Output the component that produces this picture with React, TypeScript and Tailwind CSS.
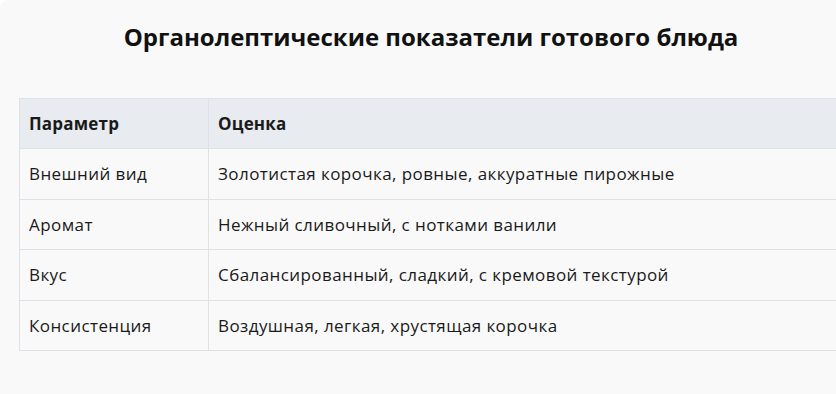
import React from "react";

const rows = [
  ["Внешний вид", "Золотистая корочка, ровные, аккуратные пирожные"],
  ["Аромат", "Нежный сливочный, с нотками ванили"],
  ["Вкус", "Сбалансированный, сладкий, с кремовой текстурой"],
  ["Консистенция", "Воздушная, легкая, хрустящая корочка"],
];

export default function App() {
  return (
    <div className="w-[836px] h-[394px] overflow-hidden bg-white" style={{ fontFamily: '"Open Sans", "Noto Sans", sans-serif' }}>
      <div className="w-[862px] h-[420px] rounded-lg bg-[#f9f9f9] px-[19px] pt-[21px] text-[#1a1a1a]">
        <h1 className="text-[24px] leading-[32px] font-bold text-center text-[#111]">
          Органолептические показатели готового блюда
        </h1>
        <table className="mt-[45px] w-full border-collapse text-[17px] tracking-[0.42px]">
          <thead>
            <tr className="bg-[#e8ebef]">
              <th className="w-[189px] h-[50.4px] border border-[#dee2e6] px-[9px] text-left font-bold tracking-[0.2px]">Параметр</th>
              <th className="h-[50.4px] border border-[#dee2e6] px-[9px] text-left font-bold tracking-[0.2px]">Оценка</th>
            </tr>
          </thead>
          <tbody>
            {rows.map(([a, b]) => (
              <tr key={a}>
                <td className="h-[50.4px] border border-[#dee2e6] px-[9px]">{a}</td>
                <td className="h-[50.4px] border border-[#dee2e6] px-[9px]">{b}</td>
              </tr>
            ))}
          </tbody>
        </table>
      </div>
    </div>
  );
}
